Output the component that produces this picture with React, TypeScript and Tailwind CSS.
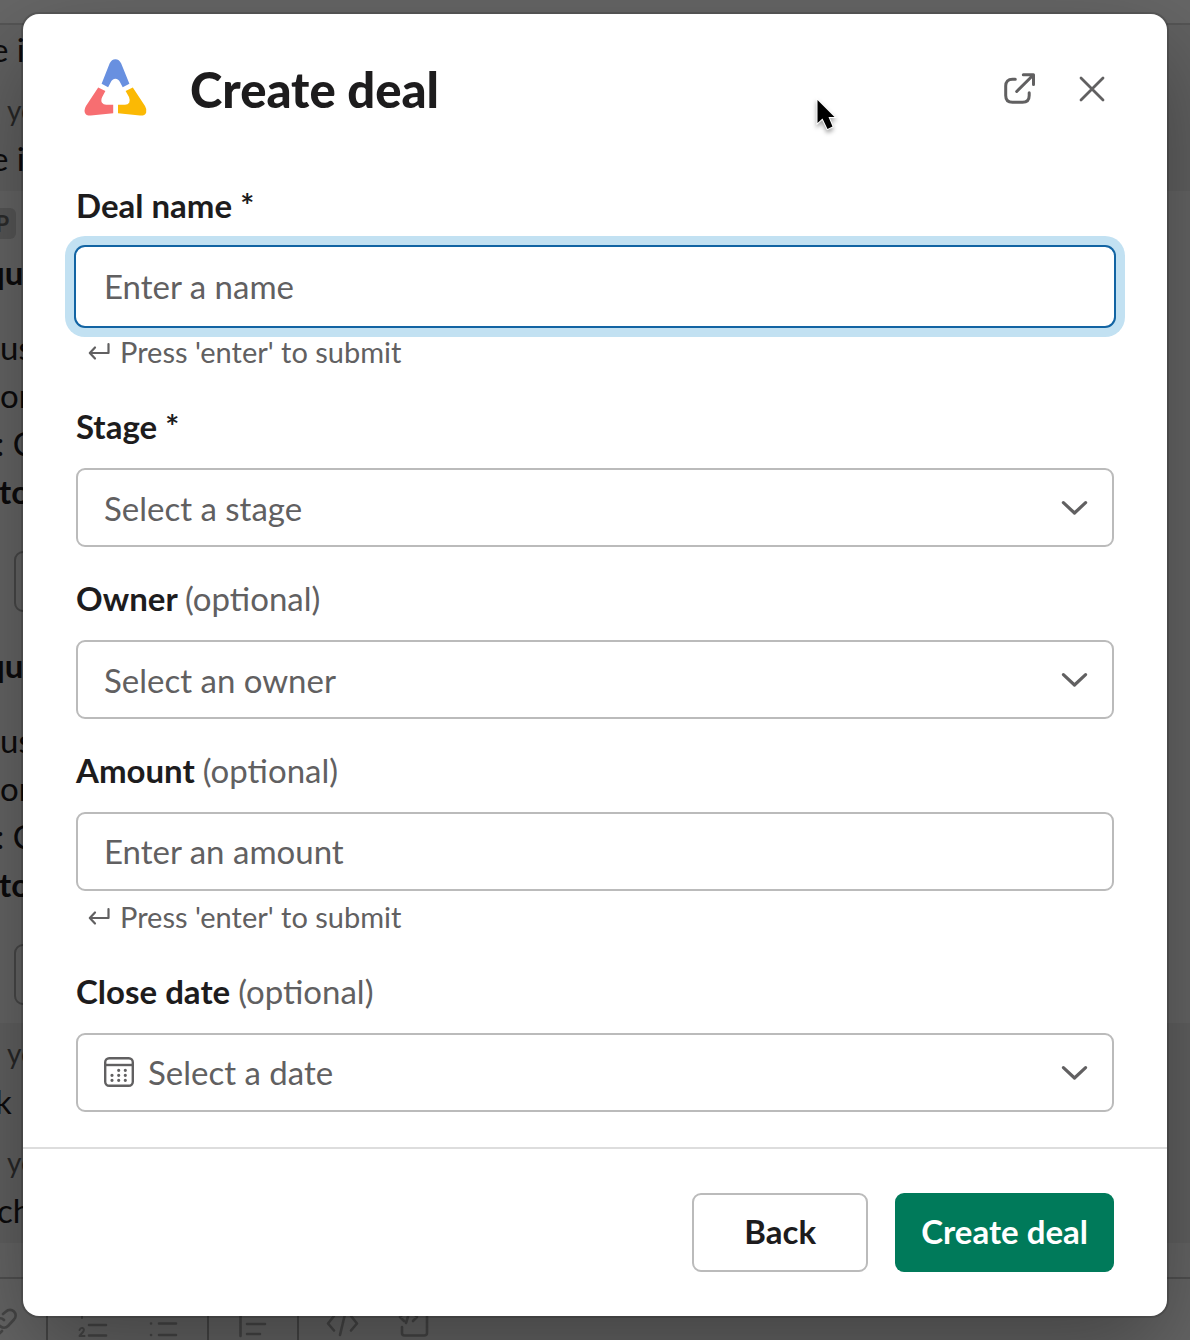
import type { ReactNode } from 'react';

const fieldBox =
  'block h-[79px] w-full rounded-[9px] border-2 bg-white text-left text-[33px] leading-[46px] text-[#616061] placeholder:text-[#616061] placeholder:opacity-100 focus:outline-none';

function Logo() {
  return (
    <svg className="h-[60px] w-16 shrink-0" viewBox="0 0 64 60" aria-hidden="true">
      <path
        fill="#6890e0"
        d="M17.6 25.8 25.6 5.600Q27.600 1.300 31.400 1.300T37.200 5.600L45.400 25.800 38.700 29.200 36.200 24.400Q34.400 20.800 31.400 20.800T26.600 24.400L24.100 29.200Z"
      />
      <path
        fill="#f76e71"
        d="M14.2 29.6 21.4 33 18.2 39Q16.6 42.6 18 44.7T22.2 46.8H29.2V55.2L6.8 57.6Q2 57.8.8 54.4-.1 51.5 2 48Z"
      />
      <path
        fill="#fbb904"
        d="M48.8 29.6 41.6 33 45 39Q46.4 42.6 45.2 44.7T41 46.8H34V55.2L56 57.6Q61 57.8 62.2 54.4 63.1 51.5 61 48Z"
      />
    </svg>
  );
}

function Chevron() {
  return (
    <svg
      className="pointer-events-none absolute top-8 right-[26px] h-4 w-7"
      viewBox="0 0 28 16"
      fill="none"
      stroke="#616061"
      strokeWidth="3.2"
      strokeLinecap="round"
      strokeLinejoin="round"
      aria-hidden="true"
    >
      <path d="M3.400 2.700 14.500 13 25.600 2.700" />
    </svg>
  );
}

function Hint() {
  return (
    <p className="flex h-[49px] items-center gap-[9px] pt-[3px] pl-3 text-[29px] leading-[44px] text-[#616061]">
      <svg
        className="h-5 w-[23px]"
        viewBox="0 0 23 20"
        fill="none"
        stroke="#616061"
        strokeWidth="2.2"
        strokeLinecap="round"
        strokeLinejoin="round"
        aria-hidden="true"
      >
        <path d="M20.5 2V11H2M7 5.5 1.8 11 7 16.5" />
      </svg>
      Press 'enter' to submit
    </p>
  );
}

function Field({
  id,
  label,
  required,
  hint,
  children,
}: {
  id: string;
  label: string;
  required?: boolean;
  hint?: boolean;
  children: ReactNode;
}) {
  return (
    <div>
      <label htmlFor={id} className="block pt-[27px] pb-[18px] text-[33px] leading-[48px] font-bold">
        {label} {required ? '*' : <span className="font-normal text-[#616061]">(optional)</span>}
      </label>
      <div className="relative">{children}</div>
      {hint && <Hint />}
    </div>
  );
}

function RequestCard() {
  return (
    <>
      <p className="-ml-[14px] font-bold">que</p>
      <div className="pt-[27px]">
        <p>us</p>
        <p>or</p>
        <p className="-ml-1">: C</p>
        <p className="-ml-px font-bold">to</p>
      </div>
      <div className="mt-[36px] ml-[14px] h-[61px] w-40 rounded-[9px] border-2 border-[#484848]" />
    </>
  );
}

function Backdrop() {
  return (
    <div
      aria-hidden="true"
      className="absolute inset-0 flex flex-col overflow-hidden bg-[#666666] text-[33px] leading-[48px] whitespace-nowrap text-[#0c0b0c]"
    >
      <div className="h-[25px] shrink-0 border-b-2 border-[#555555]" />
      <div className="h-[166px] shrink-0 bg-[#616161]">
        <p className="-ml-[9px]">e i</p>
        <p className="pt-[13px] pl-[7px] text-[28px] text-[#272727]">yo</p>
        <p className="-ml-[9px]">e i</p>
      </div>
      <div className="h-[832px] shrink-0">
        <div className="mt-[17px] -ml-5 flex h-[31px] w-9 items-center justify-end rounded-[6px] bg-[#575757] pr-[7px] text-[22px] font-bold text-[#2c2c2c]">
          P
        </div>
        <div className="pt-[9px]">
          <RequestCard />
        </div>
        <div className="pt-[29px]">
          <RequestCard />
        </div>
      </div>
      <div className="h-[220px] shrink-0 bg-[#616161] pt-[6px]">
        <p className="pl-[7px] text-[28px] text-[#272727]">yo</p>
        <p className="-ml-[5px]">k</p>
        <p className="pt-[13px] pl-[7px] text-[28px] text-[#272727]">yo</p>
        <p className="-ml-[3px]">ch</p>
      </div>
      <div className="h-9 shrink-0 border-b-2 border-[#515151]" />
      <div className="flex flex-1 items-end text-[#474747]">
        <svg
          className="h-[60px] w-[440px] shrink-0"
          viewBox="0 0 440 60"
          fill="none"
          stroke="currentColor"
          strokeWidth="2.6"
          strokeLinecap="round"
          strokeLinejoin="round"
        >
          <path d="M3 34 6 31.500a5.500 5.500 0 0 1 8 8L8 46a5.500 5.500 0 0 1-8 0M4 40a5.500 5.500 0 0 0-8 0L-10 46M2 51-3 56" />
          <path d="M47 10V60M208 10V60M298 10V60" strokeWidth="2" />
          <path d="M89 45H106M89 55.500H106M89 34H106" />
          <path d="M80 30 82 28V38M79.500 50Q80.500 47.500 82.500 48 85 49 83 52L79.500 56H84.500" strokeWidth="2" />
          <path d="M159 43.500H176M159 55H176M159 32H176M151 43.500h.1M151 55h.1M151 32h.1" />
          <path d="M240.500 28V56M247 44H265M247 54H260M247 34H265" />
          <path d="M334 36 328 43.500 334 50.500M351 36 357 43.500 351 50.500M345.500 32 340 55" />
          <path d="M402 47V53Q402 55.500 404.500 55.500H424Q427 55.500 427 53V34M404 41 400 37 404 33M413 41 417 37 413 33M410 30 406 43" />
        </svg>
      </div>
    </div>
  );
}

export default function App() {
  return (
    <main className="relative min-h-screen px-[23px] pt-[14px] pb-6 font-['Lato',sans-serif] text-[#1d1c1d]">
      <Backdrop />
      <div
        role="dialog"
        aria-labelledby="dialog-title"
        className="relative rounded-2xl bg-white shadow-[0_0_0_2px_rgba(0,0,0,0.13),0_36px_96px_0_rgba(0,0,0,0.35)]"
      >
        <header className="flex h-[140px] items-center pt-2 pr-[51px] pl-[61px]">
          <Logo />
          <h1 id="dialog-title" className="ml-[42px] flex-1 pt-[2px] text-[49px] leading-[60px] font-black">
            Create deal
          </h1>
          <button type="button" aria-label="Open in new window" className="p-2">
            <svg
              className="size-8"
              viewBox="0 0 32 32"
              fill="none"
              stroke="#616061"
              strokeWidth="3"
              strokeLinecap="round"
              strokeLinejoin="round"
            >
              <path d="M11.300 7.300H8.500Q1.700 7.300 1.700 14V23.500Q1.700 30.300 8.500 30.300H18.500Q25.200 30.300 25.200 23.500V20.700" />
              <path d="M12.700 19.500 29 3.200M19.300 2.700H29.500V12.500" />
            </svg>
          </button>
          <button type="button" aria-label="Close" className="ml-6 p-2">
            <svg
              className="size-8"
              viewBox="0 0 32 32"
              fill="none"
              stroke="#616061"
              strokeWidth="2.8"
              strokeLinecap="round"
            >
              <path d="M5 6 27 28M27 6 5 28" />
            </svg>
          </button>
        </header>

        <form id="deal" className="px-[53px] pb-[35px]">
          <Field id="name" label="Deal name" required hint>
            <input
              id="name"
              type="text"
              placeholder="Enter a name"
              className={`${fieldBox} border-white px-[26px] pb-[2px] shadow-[0_0_0_2px_#1264a3,0_0_0_11px_#c2e1f2]`}
            />
          </Field>
          <Field id="stage" label="Stage" required>
            <select id="stage" className={`${fieldBox} appearance-none border-[#bbbbbb] px-[26px]`}>
              <option>Select a stage</option>
            </select>
            <Chevron />
          </Field>
          <Field id="owner" label="Owner">
            <select id="owner" className={`${fieldBox} appearance-none border-[#bbbbbb] px-[26px]`}>
              <option>Select an owner</option>
            </select>
            <Chevron />
          </Field>
          <Field id="amount" label="Amount" hint>
            <input
              id="amount"
              type="text"
              placeholder="Enter an amount"
              className={`${fieldBox} border-[#bbbbbb] px-[26px] pb-[2px]`}
            />
          </Field>
          <Field id="date" label="Close date">
            <button id="date" type="button" className={`${fieldBox} border-[#bbbbbb] px-[26px] pb-[2px]`}>
              <span className="flex items-center gap-[14px]">
                <svg className="size-[30px]" viewBox="0 0 30 30" fill="none" stroke="#616061" aria-hidden="true">
                  <rect x="1.200" y="1.200" width="27.600" height="27.600" rx="4" strokeWidth="2.400" />
                  <path d="M1.500 8H28.500" strokeWidth="2.400" />
                  <path
                    d="M14.700 13.300h.01M21.300 13.300h.01M8 18.300h.01M14.700 18.300h.01M21.300 18.300h.01M8 23.300h.01M14.700 23.300h.01M21.300 23.300h.01"
                    strokeWidth="3.200"
                    strokeLinecap="round"
                  />
                </svg>
                Select a date
              </span>
            </button>
            <Chevron />
          </Field>
        </form>

        <footer className="flex justify-end gap-[27px] border-t-2 border-[#dddddd] px-[53px] py-11 text-[33px] leading-[46px] font-bold">
          <button type="button" className="h-[79px] w-44 rounded-[9px] border-2 border-[#bbbbbb] bg-white pb-1">
            Back
          </button>
          <button type="submit" form="deal" className="h-[79px] rounded-[9px] bg-[#007a5a] px-[26px] pb-1 text-white">
            Create deal
          </button>
        </footer>
      </div>

      <svg
        className="pointer-events-none absolute top-[95px] left-[812px] h-11 w-8 drop-shadow-[0_3px_2px_rgba(0,0,0,0.35)]"
        viewBox="0 0 32 44"
        aria-hidden="true"
      >
        <path
          d="M5.500 5V28L10.500 23.500 15.500 34 20.500 31.500 16.500 22H22.500Z"
          fill="#000"
          stroke="#fff"
          strokeWidth="2"
          paintOrder="stroke"
        />
      </svg>
    </main>
  );
}
